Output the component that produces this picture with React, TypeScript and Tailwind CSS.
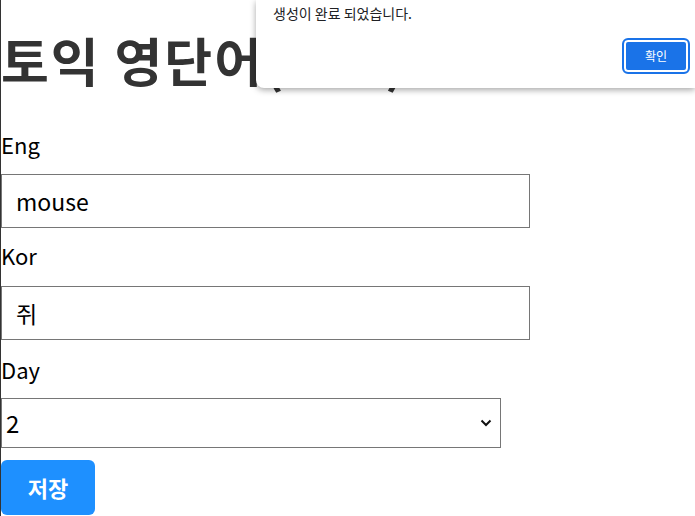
import { useState } from "react"

export default function App() {
  const [eng, setEng] = useState("mouse")
  const [kor, setKor] = useState("쥐")
  const [day, setDay] = useState("2")

  return (
    <div className="relative min-h-screen border-l border-[#333] bg-white font-['Malgun_Gothic','Noto_Sans_CJK_KR','Noto_Sans',sans-serif] text-black">
      <form className="flex flex-col items-start" onSubmit={(e) => e.preventDefault()}>
        <h1 className="mt-[30px] mb-[39px] text-[52px] leading-[60px] font-bold tracking-[2px] text-[#333]">
          토익 영단어(고급)
        </h1>

        {/* Eng */}
        <label className="text-[22px] leading-[30px]">Eng</label>
        <input
          value={eng}
          onChange={(e) => setEng(e.target.value)}
          className="mt-[15px] h-[54px] w-[529px] border border-[#767676] px-[14px] text-[23px] outline-none"
        />

        {/* Kor */}
        <label className="mt-[12px] text-[22px] leading-[30px]">Kor</label>
        <input
          value={kor}
          onChange={(e) => setKor(e.target.value)}
          className="mt-[16px] h-[54px] w-[529px] border border-[#767676] px-[14px] text-[23px] outline-none"
        />

        {/* Day */}
        <label className="mt-[14px] text-[22px] leading-[30px]">Day</label>
        <div className="relative mt-[14px]">
          <select
            value={day}
            onChange={(e) => setDay(e.target.value)}
            className="h-[50px] w-[500px] appearance-none border border-[#767676] bg-white pl-[4px] text-[24px] outline-none"
          >
            {[1, 2, 3, 4, 5].map((d) => (
              <option key={d} value={d}>
                {d}
              </option>
            ))}
          </select>
          <svg
            className="pointer-events-none absolute right-[9px] top-1/2 -translate-y-1/2"
            width="12"
            height="8"
            viewBox="0 0 12 8"
          >
            <path d="M1.5 1.5 L6 6 L10.5 1.5" fill="none" stroke="#111" strokeWidth="2" />
          </svg>
        </div>

        <button
          type="submit"
          className="mt-[12px] h-[55px] w-[94px] rounded-[6px] bg-[#1e90ff] text-[22px] font-bold text-white"
        >
          저장
        </button>
      </form>

      {/* 알림창 */}
      <div className="absolute top-0 right-0 left-[255px] h-[88px] rounded-bl-[8px] bg-white shadow-[0_2px_6px_rgba(0,0,0,0.35)]">
        <p className="pt-[3px] pl-[17px] text-[14px] text-[#202124]">생성이 완료 되었습니다.</p>
        <button className="absolute top-[40px] right-[7px] h-[32px] w-[64px] rounded-[4px] bg-[#1a73e8] text-[12px] text-white ring-2 ring-inset ring-white outline outline-2 outline-[#1a73e8]">
          확인
        </button>
      </div>
    </div>
  )
}
